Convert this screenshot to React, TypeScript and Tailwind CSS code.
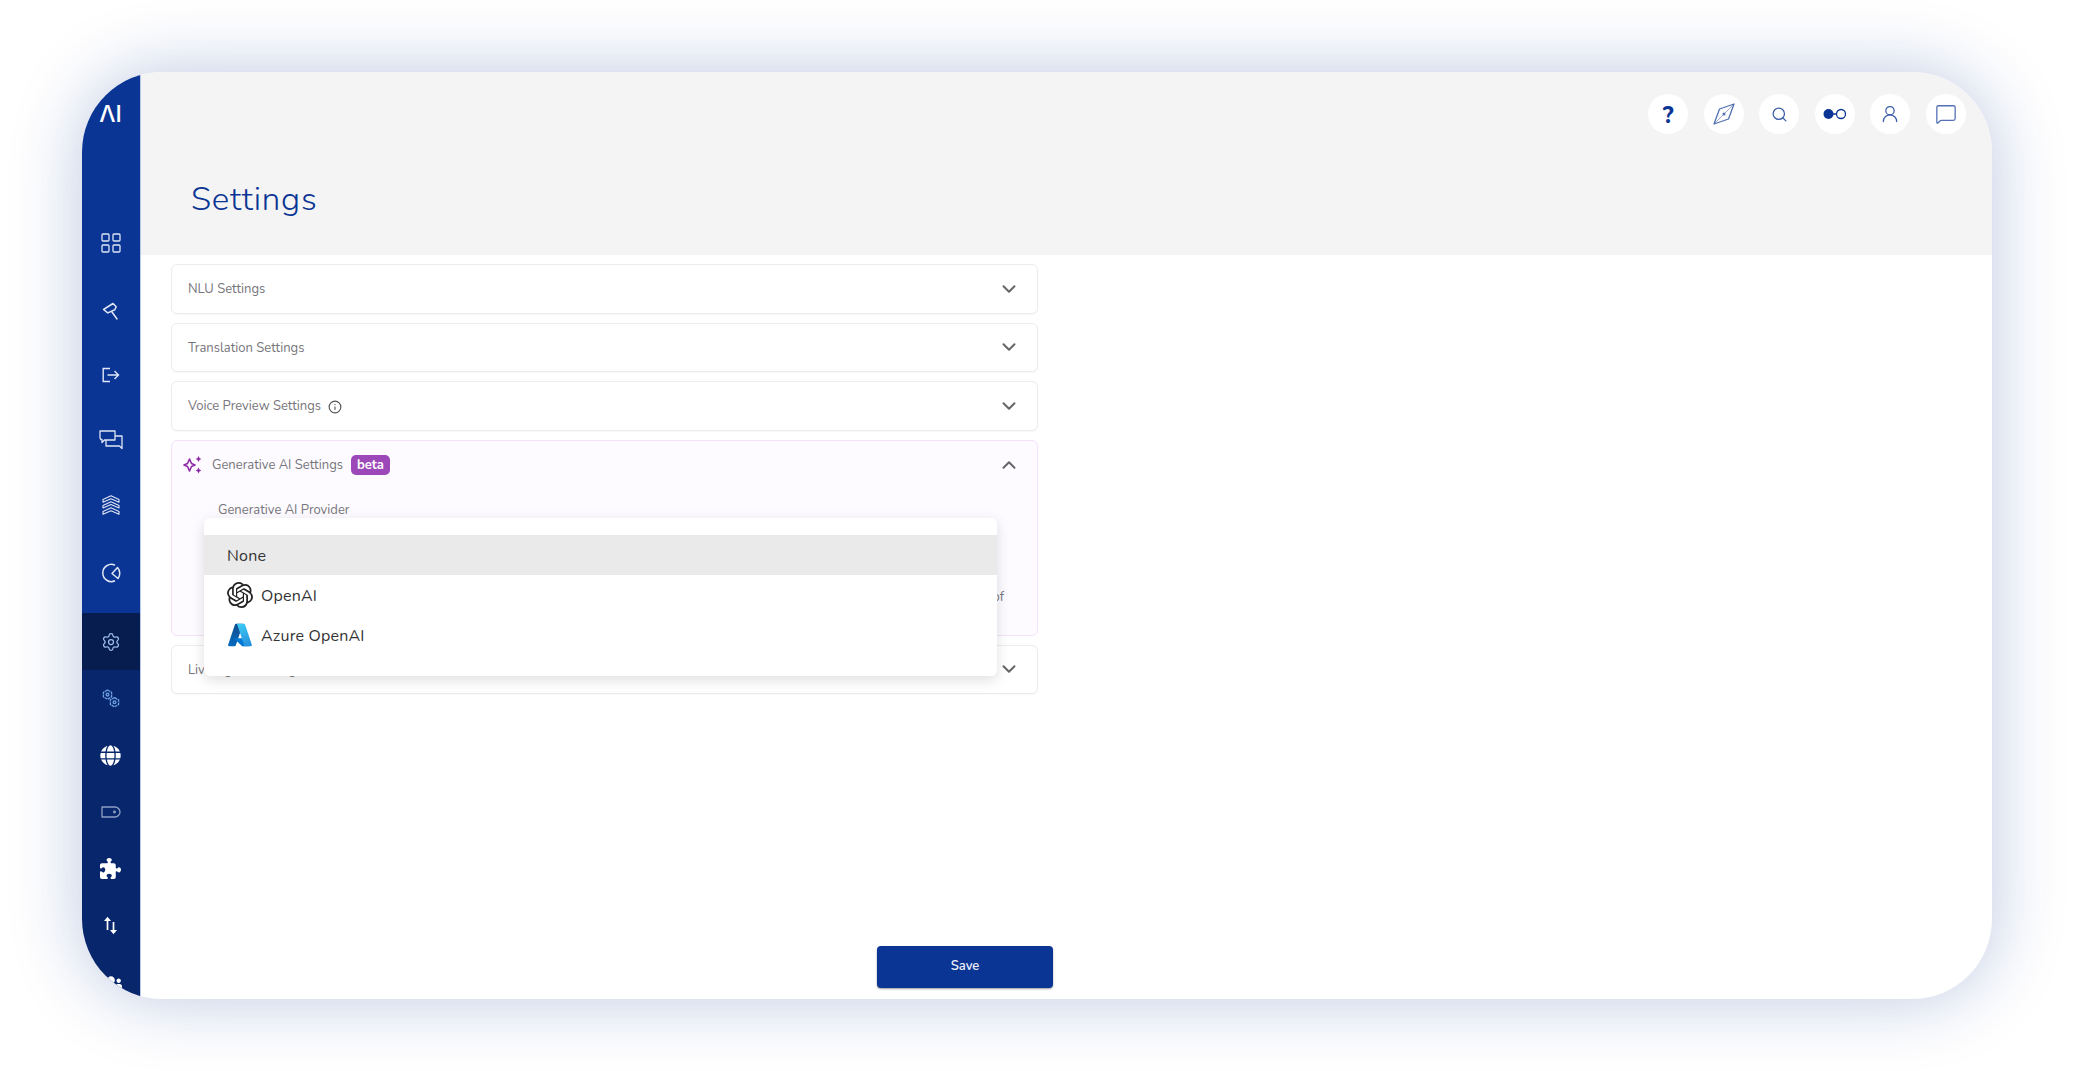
import { ReactNode } from "react";
import {
  ChevronDown,
  ChevronUp,
  Info,
  LayoutGrid,
  MessageSquare,
  Search,
  Settings,
  UserRound,
} from "lucide-react";
import { FaGlobe, FaUsers } from "react-icons/fa";
import { FaPuzzlePiece } from "react-icons/fa6";
import { SiOpenai } from "react-icons/si";

const font = "font-['Nunito','Lato','Noto_Sans',sans-serif]";

const RollerIcon = () => (
  <svg width="20" height="20" viewBox="0 0 20 20" fill="none" stroke="currentColor" strokeWidth="1.5" strokeLinejoin="round" strokeLinecap="round">
    <path d="M2.5 8.5 12 2.5l3.2 3.2-1.4 3-7 3.2z" />
    <path d="M11 11l5 7" />
  </svg>
);

const LogoutIcon = () => (
  <svg width="18" height="16" viewBox="0 0 18 16" fill="none" stroke="currentColor" strokeWidth="1.4">
    <path d="M8 1.5H1.2v13H8" />
    <path d="M5.5 8h11M12.5 4l4 4-4 4" />
  </svg>
);

const ChatsIcon = () => (
  <svg width="24" height="20" viewBox="0 0 24 20" fill="none" stroke="currentColor" strokeWidth="1.3" strokeLinejoin="round">
    <path d="M1 1h15v9H5.5L3 12.5V9.5H1.8L1 8z" />
    <path d="M16 6h7v12.5L20.5 16H7v-6" />
  </svg>
);

const LayersIcon = () => (
  <svg width="18" height="20" viewBox="0 0 18 20" fill="none" stroke="currentColor" strokeWidth="1.1" strokeLinejoin="round">
    <path d="M1 4.5 9 .8l8 3.7v2.8L9 3.8 1 7.3z" />
    <path d="M1 10.5 9 6.8l8 3.7v2.4L9 9.4l-8 3.5z" />
    <path d="M1 16.5l8-3.7 8 3.7v2.7l-8-3.5-8 3.5z" />
  </svg>
);

const PieIcon = () => (
  <svg width="20" height="20" viewBox="0 0 20 20" fill="none" stroke="currentColor" strokeWidth="1.5" strokeLinejoin="round">
    <path d="M14 2.2a8.6 8.6 0 1 0 0 15.6" />
    <path d="M11 10.5 16.5 4.5a8.6 8.6 0 0 1 .5 11z" />
  </svg>
);

const CompassNeedle = () => (
  <svg width="24" height="24" viewBox="0 0 24 24" fill="none" stroke="#0b3594" strokeWidth="1.3" strokeLinejoin="round" className="opacity-70">
    <path d="M2 22 7.5 7 22 2l-5.5 15z" />
    <path d="M2 22 22 2" strokeWidth="0.6" />
    <circle cx="12" cy="12" r="1.5" fill="#0b3594" stroke="none" />
  </svg>
);

const GearsIcon = () => (
  <svg width="18" height="19" viewBox="0 0 18 19" fill="none" stroke="#6fa3e6" strokeWidth="1.3" strokeLinejoin="round">
    <path d="M5.5 1 9.6 3.3v4.6L5.5 10.2 1.4 7.9V3.3z" strokeDasharray="3 0.6" />
    <circle cx="5.5" cy="5.6" r="1.4" />
    <path d="M12.5 8.6l4.1 2.3v4.6l-4.1 2.3-4.1-2.3v-4.6z" strokeDasharray="3 0.6" />
    <circle cx="12.5" cy="13.2" r="1.4" />
  </svg>
);

const TagIcon = () => (
  <svg width="20" height="12" viewBox="0 0 20 12" fill="none" stroke="currentColor" strokeWidth="1.3">
    <path d="M1 1h13c2.5 0 5 2.2 5 5s-2.5 5-5 5H1z" strokeLinejoin="round" />
    <circle cx="13.5" cy="6" r="0.8" fill="currentColor" />
  </svg>
);

const ArrowsIcon = () => (
  <svg width="15" height="19" viewBox="0 0 15 19" fill="currentColor" stroke="currentColor">
    <path d="M4.5 14V4" strokeWidth="1.7" />
    <path d="M1 5 4.5 .8 8 5z" stroke="none" />
    <path d="M10.5 6v9" strokeWidth="1.7" />
    <path d="M7 14l3.5 4.2L14 14z" stroke="none" />
  </svg>
);

const LinkedCircles = () => (
  <svg width="24" height="12" viewBox="0 0 24 12" fill="none">
    <circle cx="5.5" cy="6" r="5" fill="#0b3594" />
    <path d="M10 6h4" stroke="#0b3594" strokeWidth="1.5" />
    <circle cx="18" cy="6" r="4.5" stroke="#0b3594" strokeWidth="1.3" />
  </svg>
);

const SparkleIcon = () => (
  <svg width="20" height="20" viewBox="0 0 20 20" fill="none" stroke="#8e2ba6" strokeWidth="1.6" strokeLinejoin="round">
    <path d="M6.5 5.5 8.5 10l3.5 1.5-3.5 1.5-2 4.5-2-4.5L1 11.5 4.5 10z" transform="translate(0 -1.5)" />
    <path d="M15.5 1l1 2 1.8 1-1.8 1-1 2-1-2-1.8-1 1.8-1z" fill="#8e2ba6" stroke="none" />
    <path d="M15.5 12.5l1 2 1.8 1-1.8 1-1 2-1-2-1.8-1 1.8-1z" fill="#8e2ba6" stroke="none" />
  </svg>
);

const AzureIcon = () => (
  <svg width="26" height="26" viewBox="0 0 96 96">
    <defs>
      <linearGradient id="az1" x1="58.97" y1="12.7" x2="26.93" y2="87.45" gradientUnits="userSpaceOnUse">
        <stop offset="0" stopColor="#114a8b" />
        <stop offset="1" stopColor="#0669bc" />
      </linearGradient>
      <linearGradient id="az2" x1="46" y1="7" x2="81" y2="83" gradientUnits="userSpaceOnUse">
        <stop offset="0" stopColor="#3ccbf4" />
        <stop offset="1" stopColor="#2892df" />
      </linearGradient>
    </defs>
    <path fill="url(#az1)" d="M33.34 6.54h26.04l-27.03 80.1a4.15 4.15 0 0 1-3.94 2.81H8.15a4.14 4.14 0 0 1-3.93-5.47L29.4 9.38a4.15 4.15 0 0 1 3.94-2.83z" />
    <path fill="#0078d4" d="M71.17 60.26H29.88a1.91 1.91 0 0 0-1.3 3.31l26.53 24.76a4.17 4.17 0 0 0 2.85 1.13h23.38z" />
    <path fill="url(#az2)" d="M66.6 9.36a4.14 4.14 0 0 0-3.93-2.82H33.65a4.15 4.15 0 0 1 3.93 2.82l25.18 74.62a4.15 4.15 0 0 1-3.93 5.48h29.02a4.15 4.15 0 0 0 3.93-5.48z" />
  </svg>
);

const TopButton = ({ children }: { children: ReactNode }) => (
  <div className="flex h-10 w-10 items-center justify-center rounded-full bg-white text-[#0b3594]">{children}</div>
);

const NavItem = ({ children, className }: { children: ReactNode; className: string }) => (
  <div className={`flex shrink-0 items-center justify-center ${className}`}>{children}</div>
);

const AccordionRow = ({ label, extra }: { label: string; extra?: ReactNode }) => (
  <div className="flex h-[49.5px] items-center justify-between rounded-md border border-[#ececec] bg-white pl-4 pr-[17px] shadow-[0_1px_1px_rgba(0,0,0,0.03)]">
    <div className="flex items-center gap-[7px] pt-[2px] text-[13px] text-[#77767c]">
      {label}
      {extra}
    </div>
    <ChevronDown size={22} strokeWidth={2.2} className="text-[#666]" />
  </div>
);

export default function App() {
  return (
    <div className={`h-[1071px] w-full overflow-hidden bg-white px-[82px] py-[72px] ${font}`}>
      <div className="flex h-[927px] overflow-hidden rounded-[80px] bg-white shadow-[0_0_70px_rgba(11,53,148,0.28)]">
        <aside className="flex w-[59px] shrink-0 flex-col overflow-hidden border-r border-[#8ea3d3]/60 text-[#dfe6f5]">
          <div className="flex h-[541px] shrink-0 flex-col bg-[#0b3594]">
            <div className="flex h-[80px] shrink-0 items-center justify-center pr-[1px] pt-[5px]">
              <span className="text-[23px] font-medium leading-none text-white font-['Inter',sans-serif]">ΛI</span>
            </div>
            <div className="h-[57px] shrink-0" />
            <NavItem className="h-[68px] pr-[1px]"><LayoutGrid size={24} strokeWidth={1.3} /></NavItem>
            <NavItem className="h-[68px] pr-[1px]"><RollerIcon /></NavItem>
            <NavItem className="h-[60px] pr-[1px]"><LogoutIcon /></NavItem>
            <NavItem className="h-[70px] pr-[1px]"><ChatsIcon /></NavItem>
            <NavItem className="h-[60px] pr-[1px]"><LayersIcon /></NavItem>
            <NavItem className="h-[76px] pr-[1px]"><PieIcon /></NavItem>
          </div>
          <div className="flex min-h-0 flex-1 flex-col bg-[#07266c]">
            <NavItem className="h-[57px] bg-[#071d4f] pr-[1px] text-[#9fc1ee]"><Settings size={20} strokeWidth={1.5} /></NavItem>
            <NavItem className="h-[57px] pr-[1px]"><GearsIcon /></NavItem>
            <NavItem className="h-[57px] pr-[1px] text-white"><FaGlobe size={21} /></NavItem>
            <NavItem className="h-[56px] pr-[1px] text-[#8f9fc4]"><TagIcon /></NavItem>
            <NavItem className="h-[57px] pr-[1px] text-white"><FaPuzzlePiece size={21} /></NavItem>
            <NavItem className="h-[57px] pr-[1px] text-white"><ArrowsIcon /></NavItem>
            <NavItem className="h-[60px] pr-[1px] text-white"><FaUsers size={22} /></NavItem>
          </div>
        </aside>

        <main className="flex min-w-0 flex-1 flex-col">
          <header className="flex h-[183px] shrink-0 flex-col bg-[#f4f4f4]">
            <div className="flex justify-end gap-[15.6px] pr-[26px] pt-[22px]">
              <TopButton><span className="pt-[2px] text-[23px] font-extrabold leading-none">?</span></TopButton>
              <TopButton><CompassNeedle /></TopButton>
              <TopButton><Search size={17} strokeWidth={1.8} className="opacity-80" /></TopButton>
              <TopButton><LinkedCircles /></TopButton>
              <TopButton><UserRound size={20} strokeWidth={1.5} className="opacity-80" /></TopButton>
              <TopButton><MessageSquare size={22} strokeWidth={1.4} className="opacity-70" /></TopButton>
            </div>
            <h1 className="ml-[50px] mt-[46px] text-[33px] font-light leading-10 tracking-[0.8px] text-[#0b3594]">Settings</h1>
          </header>

          <div className="flex min-h-0 flex-1 flex-col pl-[30px] pt-[9px]">
            <div className="flex w-[867px] flex-col gap-[9px]">
              <AccordionRow label="NLU Settings" />
              <AccordionRow label="Translation Settings" />
              <AccordionRow label="Voice Preview Settings" extra={<Info size={14} className="text-[#555]" />} />

              <section className="relative h-[196px] rounded-md border border-[#f3e2f9] bg-[#fdfbff]">
                <div className="flex h-[48px] items-center justify-between pl-[11px] pr-[17px]">
                  <div className="flex items-center text-[13px] text-[#77767c]">
                    <SparkleIcon />
                    <span className="ml-[9px] pt-[2px]">Generative AI Settings</span>
                    <span className="ml-[8px] rounded-[5px] bg-[#9c48b8] px-[6px] py-[1px] text-[13px] font-bold leading-[18px] text-white">beta</span>
                  </div>
                  <ChevronUp size={22} strokeWidth={2.2} className="text-[#666]" />
                </div>
                <div className="ml-[46px] mt-[13px] text-[13px] leading-4 text-[#77767c]">Generative AI Provider</div>
                <div className="mr-[33px] mt-[71px] text-right text-[13px] leading-4 text-[#77767c]">of</div>

                <div className="absolute left-[32px] top-[77px] z-10 flex h-[158px] w-[793px] flex-col rounded-md bg-white pt-[17px] shadow-[0_4px_14px_rgba(0,0,0,0.13)]">
                  <div className="flex h-10 items-center bg-[#eaeaea] pl-[23px] pt-[2px] text-[16px] tracking-[0.2px] text-[#333]">None</div>
                  <div className="flex h-10 items-center gap-2 pl-[23px] text-[16px] tracking-[0.2px] text-[#333]">
                    <SiOpenai size={26} className="text-[#222]" />
                    <span className="pt-[2px]">OpenAI</span>
                  </div>
                  <div className="flex h-10 items-center gap-2 pl-[23px] text-[16px] tracking-[0.2px] text-[#333]">
                    <AzureIcon />
                    <span className="pt-[2px]">Azure OpenAI</span>
                  </div>
                </div>
              </section>

              <AccordionRow label="Live Agent Settings" />
            </div>

            <div className="mt-auto mb-[11px] ml-[706px]">
              <button className="h-[42px] w-[176px] rounded bg-[#0b3594] text-[13px] font-semibold text-[#eef1fa] shadow-[0_1px_2px_rgba(0,0,0,0.4)]">Save</button>
            </div>
          </div>
        </main>
      </div>
    </div>
  );
}
